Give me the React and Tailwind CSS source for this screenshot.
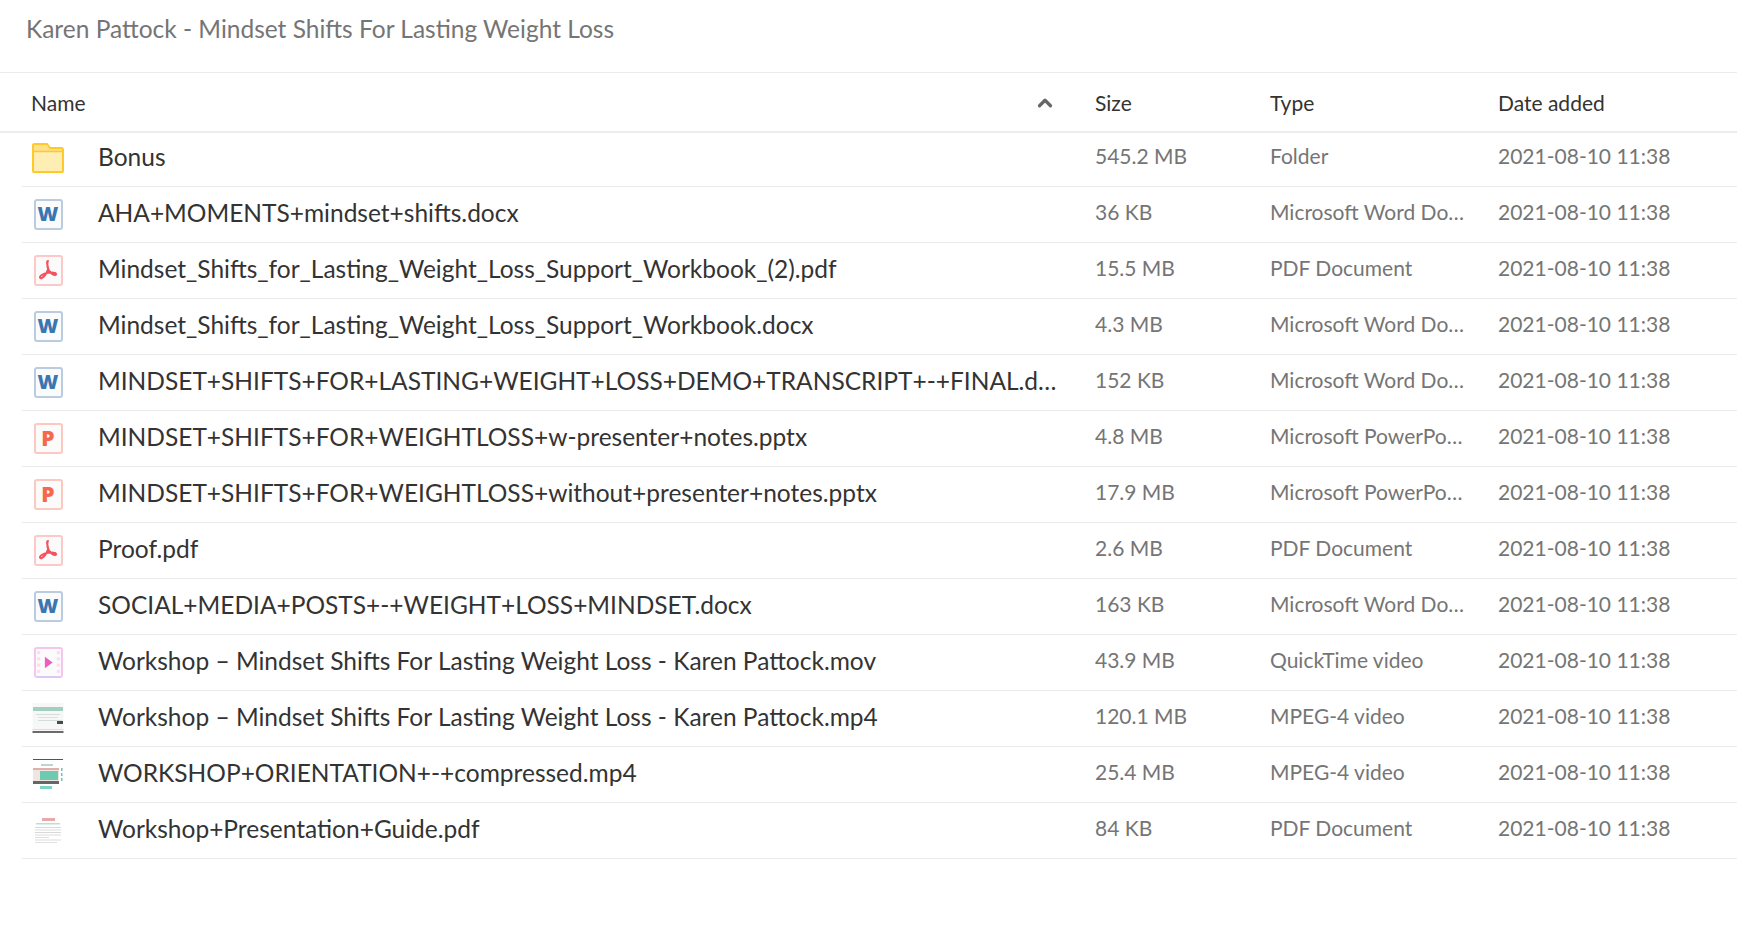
import { ChevronUp } from "lucide-react";

const rows = [
  { icon: "folder", name: "Bonus", size: "545.2 MB", type: "Folder" },
  { icon: "word", name: "AHA+MOMENTS+mindset+shifts.docx", size: "36 KB", type: "Microsoft Word Do…" },
  { icon: "pdf", name: "Mindset_Shifts_for_Lasting_Weight_Loss_Support_Workbook_(2).pdf", size: "15.5 MB", type: "PDF Document" },
  { icon: "word", name: "Mindset_Shifts_for_Lasting_Weight_Loss_Support_Workbook.docx", size: "4.3 MB", type: "Microsoft Word Do…" },
  { icon: "word", name: "MINDSET+SHIFTS+FOR+LASTING+WEIGHT+LOSS+DEMO+TRANSCRIPT+-+FINAL.d…", size: "152 KB", type: "Microsoft Word Do…" },
  { icon: "ppt", name: "MINDSET+SHIFTS+FOR+WEIGHTLOSS+w-presenter+notes.pptx", size: "4.8 MB", type: "Microsoft PowerPo…" },
  { icon: "ppt", name: "MINDSET+SHIFTS+FOR+WEIGHTLOSS+without+presenter+notes.pptx", size: "17.9 MB", type: "Microsoft PowerPo…" },
  { icon: "pdf", name: "Proof.pdf", size: "2.6 MB", type: "PDF Document" },
  { icon: "word", name: "SOCIAL+MEDIA+POSTS+-+WEIGHT+LOSS+MINDSET.docx", size: "163 KB", type: "Microsoft Word Do…" },
  { icon: "mov", name: "Workshop – Mindset Shifts For Lasting Weight Loss - Karen Pattock.mov", size: "43.9 MB", type: "QuickTime video" },
  { icon: "thumb1", name: "Workshop – Mindset Shifts For Lasting Weight Loss - Karen Pattock.mp4", size: "120.1 MB", type: "MPEG-4 video" },
  { icon: "thumb2", name: "WORKSHOP+ORIENTATION+-+compressed.mp4", size: "25.4 MB", type: "MPEG-4 video" },
  { icon: "thumb3", name: "Workshop+Presentation+Guide.pdf", size: "84 KB", type: "PDF Document" },
];

function FileBox({ color, children }) {
  return (
    <div className={`flex h-[31px] w-[29px] items-center justify-center rounded-[3px] border-2 bg-[#fbfbfc] ${color}`}>
      {children}
    </div>
  );
}

function PdfGlyph() {
  return (
    <svg width="20" height="22" viewBox="0 0 20 22" fill="none" stroke="#f4525e" strokeWidth="2" strokeLinejoin="round">
      <path d="M10 2c-1.300 0-1.200 2.500 0 6 1.200 3 -3 9 -6 11 -2 1 -3 -1 -1 -2.500 3 -2.300 10 -4 14 -2.500 2 .8 1 2.500 -1 1.800 -3 -1 -6 -5 -6.500 -8 -.3 -2.500 0 -5.800 .5 -5.800z" />
    </svg>
  );
}

function FileIcon({ kind }) {
  if (kind === "folder") {
    return (
      <svg width="32" height="30" viewBox="0 0 32 30">
        <path d="M1 2.500a1.500 1.500 0 0 1 1.500-1.500h12.500l3 4h11.500a1.500 1.500 0 0 1 1.500 1.500v21.500a1 1 0 0 1-1 1H2a1 1 0 0 1-1-1z" fill="#ffeeb3" stroke="#ffc928" strokeWidth="2" />
        <path d="M2 2h12.500l3 4H30v2H2z" fill="#ffe08a" />
        <path d="M1 8.500h30" stroke="#ffc928" strokeWidth="1.500" />
      </svg>
    );
  }
  if (kind === "word") {
    return (
      <FileBox color="border-[#b9cce0]">
        <span className="text-[20px] leading-none font-black text-[#3a77b2] font-['Open_Sans',sans-serif]">W</span>
      </FileBox>
    );
  }
  if (kind === "pdf") {
    return (
      <FileBox color="border-[#fcc8c8]">
        <PdfGlyph />
      </FileBox>
    );
  }
  if (kind === "ppt") {
    return (
      <FileBox color="border-[#fcc8c0]">
        <span className="text-[21px] leading-none font-black text-[#f5694a] font-['Open_Sans',sans-serif]">P</span>
      </FileBox>
    );
  }
  if (kind === "mov") {
    return (
      <div className="flex h-[31px] w-[29px] items-center justify-center rounded-[3px] border-2 border-[#f6c6ea] border-b-[#dcc8f2] bg-[#fbfbfc]">
        <svg width="25" height="27" viewBox="0 0 24 26">
          <g fill="#fbdcf2">
            <rect x="1" y="2" width="3" height="3" />
            <rect x="1" y="8" width="3" height="3" />
            <rect x="1" y="14" width="3" height="3" />
            <rect x="1" y="20" width="3" height="3" />
            <rect x="20" y="2" width="3" height="3" />
            <rect x="20" y="8" width="3" height="3" />
            <rect x="20" y="14" width="3" height="3" />
            <rect x="20" y="20" width="3" height="3" />
          </g>
          <path d="M8.500 7.500 16 13l-7.500 5.500z" fill="#ec5fc0" />
        </svg>
      </div>
    );
  }
  if (kind === "thumb1") {
    return (
      <svg width="32" height="30" viewBox="0 0 32 30">
        <rect x="0.500" y="0" width="31" height="30" fill="#f7f7f7" />
        <rect x="1" y="4" width="30" height="4" fill="#a3cfc3" />
        <rect x="4" y="11" width="24" height="1" fill="#d3dedb" />
        <rect x="6" y="14" width="20" height="1" fill="#dde3e1" />
        <rect x="6" y="17" width="24" height="1" fill="#d3dedb" />
        <rect x="25" y="18" width="6" height="3" fill="#4a4a4a" />
        <rect x="0.500" y="26" width="31" height="1" fill="#f0d8d8" />
        <rect x="0.500" y="28" width="31" height="2" fill="#6b6b6b" />
      </svg>
    );
  }
  if (kind === "thumb2") {
    return (
      <svg width="32" height="32" viewBox="0 0 32 32">
        <rect x="1" y="1" width="30" height="1" fill="#555" />
        <rect x="9" y="6" width="12" height="2" fill="#b5d8d4" />
        <rect x="1" y="10" width="26" height="16" fill="#efe6e4" />
        <rect x="1" y="10" width="26" height="2" fill="#dfb0a8" />
        <rect x="8" y="13" width="18" height="9" fill="#6fcbb0" />
        <rect x="1" y="23" width="26" height="3" fill="#666" />
        <rect x="29" y="10" width="1.500" height="3" fill="#6fc2b7" />
        <rect x="29" y="15" width="1.500" height="3" fill="#6fc2b7" />
        <rect x="29" y="20" width="1.500" height="3" fill="#6fc2b7" />
        <rect x="8" y="28" width="12" height="3" fill="#7bd4c7" />
      </svg>
    );
  }
  return (
    <svg width="32" height="30" viewBox="0 0 32 30">
      <rect x="10" y="3" width="13" height="3" fill="#eba8a8" />
      <rect x="4" y="8" width="24" height="1.500" fill="#b5e0dc" />
      <rect x="3" y="12" width="26" height="1" fill="#d8d8d8" />
      <rect x="3" y="14.500" width="26" height="1" fill="#dcdcdc" />
      <rect x="3" y="17" width="26" height="1" fill="#d8d8d8" />
      <rect x="3" y="19.500" width="26" height="1" fill="#dcdcdc" />
      <rect x="3" y="22" width="14" height="1" fill="#cfe5e2" />
      <rect x="3" y="24.500" width="26" height="1" fill="#dcdcdc" />
      <rect x="3" y="27" width="22" height="1" fill="#e2e2e2" />
    </svg>
  );
}

export default function App() {
  return (
    <div className="min-h-screen bg-white font-['Lato',sans-serif]">
      <div className="flex h-[73px] items-center border-b border-[#ececec] pl-[26px] pb-[14px]">
        <h1 className="text-[24.5px] text-[#757575]">Karen Pattock - Mindset Shifts For Lasting Weight Loss</h1>
      </div>

      <div className="flex h-[60px] items-center border-b-2 border-[#ececec] pt-[1px] text-[21px] text-[#333333]">
        <div className="flex w-[1095px] items-center pl-[31px] pr-[39px]">
          <span className="flex-1">Name</span>
          <ChevronUp size={22} strokeWidth={3.5} className="text-[#666666]" />
        </div>
        <div className="w-[175px]">Size</div>
        <div className="w-[228px]">Type</div>
        <div>Date added</div>
      </div>

      <div className="ml-[22px]">
        {rows.map((row) => (
          <div key={row.name} className="flex h-[56px] items-center border-b border-[#ececec] pb-[3px] text-[21px] text-[#757575] first:h-[54px] first:pb-[5px]">
            <div className="w-[76px] shrink-0 pt-[2px] pl-[10px]">
              <div className="flex w-[32px] justify-center">
                <FileIcon kind={row.icon} />
              </div>
            </div>
            <div className="w-[997px] shrink-0 whitespace-nowrap text-[24.5px] text-[#333333]">{row.name}</div>
            <div className="w-[175px] shrink-0 pb-[2px]">{row.size}</div>
            <div className="w-[228px] shrink-0 whitespace-nowrap pb-[2px]">{row.type}</div>
            <div className="whitespace-nowrap pb-[2px]">2021-08-10 11:38</div>
          </div>
        ))}
      </div>
    </div>
  );
}
